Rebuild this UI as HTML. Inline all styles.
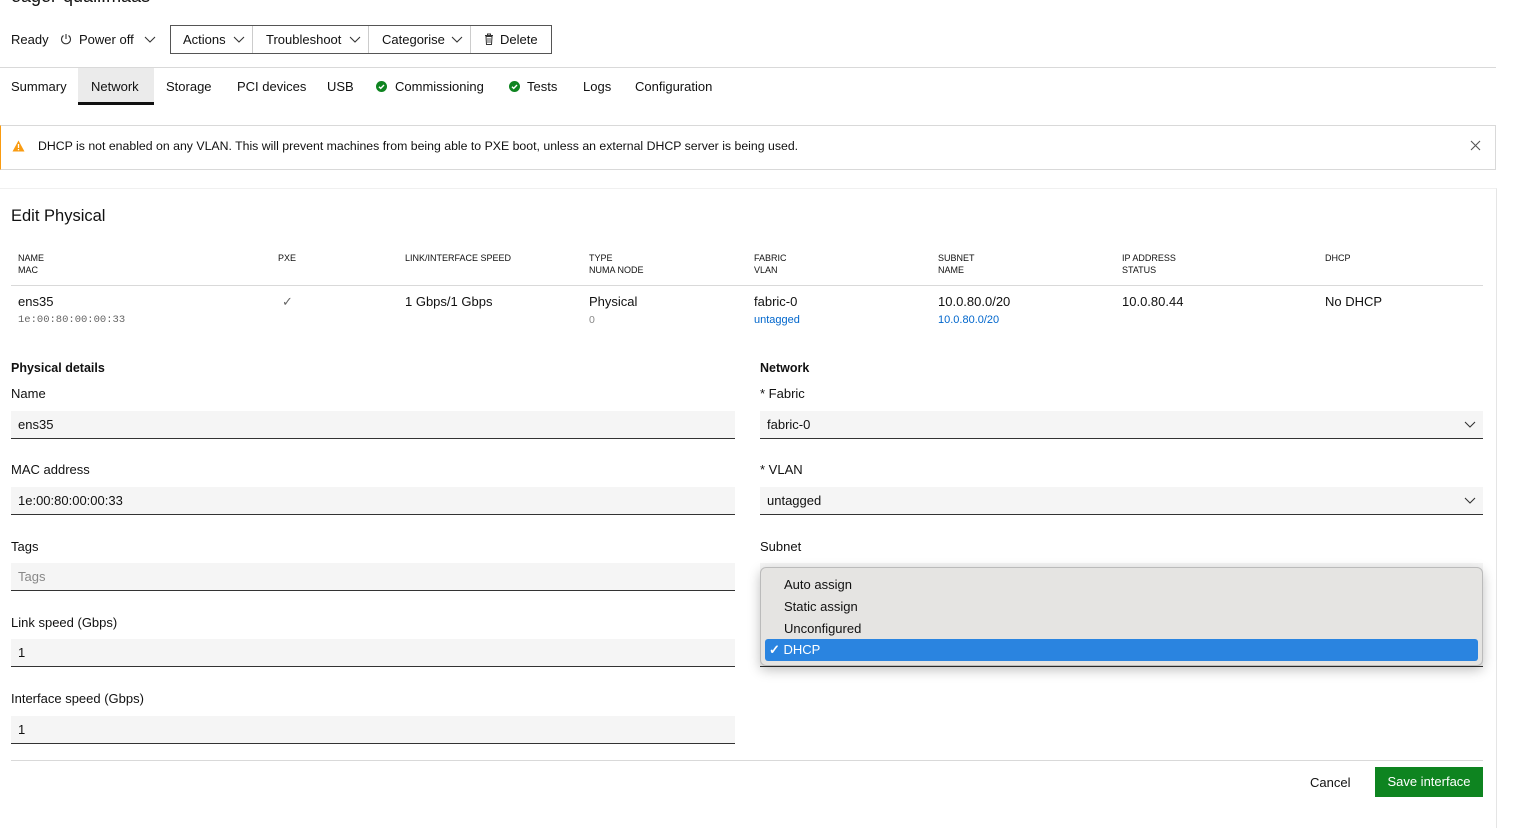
<!DOCTYPE html>
<html><head><meta charset="utf-8">
<style>
*{box-sizing:border-box;margin:0;padding:0}
body{width:1514px;height:813px;overflow:hidden;background:#fff;font-family:"Liberation Sans",sans-serif;font-size:13px;color:#111;position:relative}
.a{position:absolute;white-space:nowrap}
.h{font-size:9px;line-height:12px;color:#111;font-weight:500}
.inp{position:absolute;height:28px;background:#f5f5f5;border-bottom:1px solid #333;padding:6px 7px;line-height:16px}
.chev{position:absolute;width:12px;height:8px}
.link{color:#0066cc;font-size:11px}
.grp{position:absolute;left:170px;top:25px;width:382px;height:29px;border:1px solid #555}
.grp div{position:absolute;top:0;height:27px;line-height:27px;border-right:1px solid #ccc}
.tab{top:79px;line-height:15px}
</style></head><body>
<div class="a" style="left:11px;top:-14px;font-size:18px">eager-quail.maas</div>
<div class="a" style="left:11px;top:32px">Ready</div>
<svg class="a" style="left:60px;top:33px" width="12" height="12" viewBox="0 0 12 12"><path d="M3.5 2.5A4.5 4.5 0 1 0 8.5 2.5M6 1v5" fill="none" stroke="#333" stroke-width="1.1"/></svg>
<div class="a" style="left:79px;top:32px">Power off</div>
<svg class="chev" style="left:144px;top:36px" viewBox="0 0 12 8"><path d="M1 1l5 5 5-5" fill="none" stroke="#333" stroke-width="1.1"/></svg>
<div class="grp">
<div style="left:0;width:82px;padding-left:12px">Actions</div>
<div style="left:82px;width:116px;padding-left:13px">Troubleshoot</div>
<div style="left:198px;width:102px;padding-left:13px">Categorise</div>
<div style="left:300px;width:80px;border:none;padding-left:29px">Delete</div>
</div>
<svg class="chev" style="left:233px;top:36px" viewBox="0 0 12 8"><path d="M1 1l5 5 5-5" fill="none" stroke="#333" stroke-width="1.1"/></svg>
<svg class="chev" style="left:349px;top:36px" viewBox="0 0 12 8"><path d="M1 1l5 5 5-5" fill="none" stroke="#333" stroke-width="1.1"/></svg>
<svg class="chev" style="left:451px;top:36px" viewBox="0 0 12 8"><path d="M1 1l5 5 5-5" fill="none" stroke="#333" stroke-width="1.1"/></svg>
<svg class="a" style="left:484px;top:33px" width="10" height="12" viewBox="0 0 10 12"><path d="M1 2.5h8M3.5 2.5V1h3v1.5M2 3.5h6l-.5 8h-5z" fill="none" stroke="#333" stroke-width="1"/><path d="M4 5v5M6 5v5" stroke="#333" stroke-width=".8"/></svg>
<div class="a" style="left:0;top:67px;width:1496px;height:1px;background:#d9d9d9"></div>
<div class="a" style="left:78px;top:68px;width:76px;height:37px;background:#ebebeb;border-bottom:3px solid #111"></div>
<div class="a tab" style="left:11px">Summary</div>
<div class="a tab" style="left:91px">Network</div>
<div class="a tab" style="left:166px">Storage</div>
<div class="a tab" style="left:237px">PCI devices</div>
<div class="a tab" style="left:327px">USB</div>
<svg class="a" style="left:376px;top:81px" width="11" height="11" viewBox="0 0 11 11"><circle cx="5.5" cy="5.5" r="5.5" fill="#0e8420"/><path d="M3 5.7l1.7 1.7L8 4" fill="none" stroke="#fff" stroke-width="1.4"/></svg>
<div class="a tab" style="left:395px">Commissioning</div>
<svg class="a" style="left:509px;top:81px" width="11" height="11" viewBox="0 0 11 11"><circle cx="5.5" cy="5.5" r="5.5" fill="#0e8420"/><path d="M3 5.7l1.7 1.7L8 4" fill="none" stroke="#fff" stroke-width="1.4"/></svg>
<div class="a tab" style="left:527px">Tests</div>
<div class="a tab" style="left:583px">Logs</div>
<div class="a tab" style="left:635px">Configuration</div>
<div class="a" style="left:0;top:125px;width:1496px;height:45px;border:1px solid #d9d9d9;border-left:1px solid #f99b11"></div>
<svg class="a" style="left:12px;top:140px" width="13" height="12" viewBox="0 0 13 12"><path d="M6.5 0.5L12.5 11.5H0.5z" fill="#f99b11"/><path d="M6.5 4v4M6.5 9v1.3" stroke="#fff" stroke-width="1.3"/></svg>
<div class="a" style="left:38px;top:139px;font-size:12.3px">DHCP is not enabled on any VLAN. This will prevent machines from being able to PXE boot, unless an external DHCP server is being used.</div>
<svg class="a" style="left:1470px;top:140px" width="11" height="11" viewBox="0 0 11 11"><path d="M1 1l9 9M10 1l-9 9" stroke="#555" stroke-width="1.1"/></svg>
<div class="a" style="left:0;top:188px;width:1497px;height:640px;border-top:1px solid #f0f0f0;border-right:1px solid #e5e5e5"></div>
<div class="a" style="left:11px;top:206px;font-size:16.5px;line-height:20px">Edit Physical</div>
<div class="a h" style="left:18px;top:252px">NAME<br>MAC</div>
<div class="a h" style="left:278px;top:252px">PXE</div>
<div class="a h" style="left:405px;top:252px">LINK/INTERFACE SPEED</div>
<div class="a h" style="left:589px;top:252px">TYPE<br>NUMA NODE</div>
<div class="a h" style="left:754px;top:252px">FABRIC<br>VLAN</div>
<div class="a h" style="left:938px;top:252px">SUBNET<br>NAME</div>
<div class="a h" style="left:1122px;top:252px">IP ADDRESS<br>STATUS</div>
<div class="a h" style="left:1325px;top:252px">DHCP</div>
<div class="a" style="left:11px;top:285px;width:1472px;height:1px;background:#d9d9d9"></div>
<div class="a" style="left:18px;top:294px">ens35</div>
<div class="a" style="left:18px;top:314px;font-family:'Liberation Mono',monospace;font-size:10.5px;color:#666">1e:00:80:00:00:33</div>
<div class="a" style="left:282px;top:294px;color:#666">✓</div>
<div class="a" style="left:405px;top:294px">1 Gbps/1 Gbps</div>
<div class="a" style="left:589px;top:294px">Physical</div>
<div class="a" style="left:589px;top:314px;font-size:10.5px;color:#888">0</div>
<div class="a" style="left:754px;top:294px">fabric-0</div>
<div class="a link" style="left:754px;top:314px">untagged</div>
<div class="a" style="left:938px;top:294px">10.0.80.0/20</div>
<div class="a link" style="left:938px;top:314px">10.0.80.0/20</div>
<div class="a" style="left:1122px;top:294px">10.0.80.44</div>
<div class="a" style="left:1325px;top:294px">No DHCP</div>

<div class="a" style="left:11px;top:361px;font-weight:bold;font-size:12.5px">Physical details</div>
<div class="a" style="left:11px;top:386px">Name</div>
<div class="inp" style="left:11px;top:411px;width:724px">ens35</div>
<div class="a" style="left:11px;top:462px">MAC address</div>
<div class="inp" style="left:11px;top:487px;width:724px">1e:00:80:00:00:33</div>
<div class="a" style="left:11px;top:539px">Tags</div>
<div class="inp" style="left:11px;top:563px;width:724px;color:#888">Tags</div>
<div class="a" style="left:11px;top:615px">Link speed (Gbps)</div>
<div class="inp" style="left:11px;top:639px;width:724px">1</div>
<div class="a" style="left:11px;top:691px">Interface speed (Gbps)</div>
<div class="inp" style="left:11px;top:716px;width:724px">1</div>

<div class="a" style="left:760px;top:361px;font-weight:bold;font-size:12.5px">Network</div>
<div class="a" style="left:760px;top:386px">* Fabric</div>
<div class="inp" style="left:760px;top:411px;width:723px">fabric-0</div>
<svg class="chev" style="left:1464px;top:421px" viewBox="0 0 12 8"><path d="M1 1l5 5 5-5" fill="none" stroke="#333" stroke-width="1.1"/></svg>
<div class="a" style="left:760px;top:462px">* VLAN</div>
<div class="inp" style="left:760px;top:487px;width:723px">untagged</div>
<svg class="chev" style="left:1464px;top:497px" viewBox="0 0 12 8"><path d="M1 1l5 5 5-5" fill="none" stroke="#333" stroke-width="1.1"/></svg>
<div class="a" style="left:760px;top:539px">Subnet</div>
<div class="a" style="left:760px;top:563px;width:723px;height:104px;background:#f5f5f5;border-bottom:1px solid #333"></div>
<div class="a" style="left:760px;top:567px;width:723px;height:99px;background:#e5e4e2;border:1px solid #bbb;border-radius:6px;box-shadow:0 4px 12px rgba(0,0,0,.25)"></div>
<div class="a" style="left:784px;top:577px">Auto assign</div>
<div class="a" style="left:784px;top:599px">Static assign</div>
<div class="a" style="left:784px;top:621px">Unconfigured</div>
<div class="a" style="left:765px;top:639px;width:713px;height:22px;background:#2a84e0;border-radius:3px;color:#fff;padding-left:4px;line-height:22px"><b>✓</b> DHCP</div>

<div class="a" style="left:11px;top:760px;width:1472px;height:1px;background:#d9d9d9"></div>
<div class="a" style="left:1310px;top:775px">Cancel</div>
<div class="a" style="left:1375px;top:767px;width:108px;height:30px;background:#0e8420;color:#fff;line-height:30px;text-align:center">Save interface</div>
</body></html>
